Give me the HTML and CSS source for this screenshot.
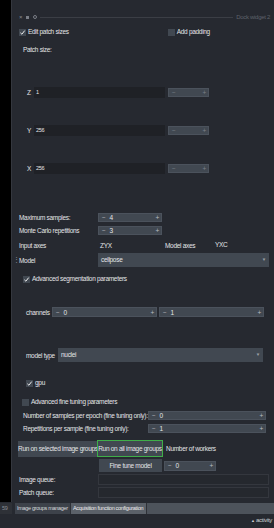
FILE: index.html
```html
<!DOCTYPE html>
<html lang="en">
<head>
  <meta charset="UTF-8">
  <meta name="viewport" content="width=device-width, initial-scale=1.0">
  <title>Dock widget 2</title>
  <link rel="stylesheet" href="styles.css">
</head>
<body>
  <div class="window">
    <div class="main">
      <!-- canvas strip on the left -->
      <div class="rail"></div>

      <div class="dock">
        <!-- Title bar of the dock -->
        <div class="row dock-title">
          <span class="ticon">&times;</span>
          <span class="ticon sq"></span>
          <span class="ticon ring"></span>
          <span class="title-line"></span>
          <span class="title-text">Dock widget 2</span>
        </div>

        <div class="row r-check">
          <span class="check on"><svg viewBox="0 0 7 7"><path d="M1.4 3.8 L2.9 5.2 L5.7 1.6" fill="none" stroke="#fff" stroke-width="0.9"/></svg></span>
          <span class="txt">Edit patch sizes</span>
          <span class="check pad"></span>
          <span class="txt">Add padding</span>
        </div>

        <div class="row r-patch"><span class="txt">Patch size:</span></div>

        <!-- Patch size fields -->
        <div class="row axis r-z">
          <span class="axis-lbl">Z</span>
          <span class="field">1</span>
          <span class="spin small"><span>&minus;</span><span>+</span></span>
        </div>
        <div class="row axis r-y">
          <span class="axis-lbl">Y</span>
          <span class="field">256</span>
          <span class="spin small"><span>&minus;</span><span>+</span></span>
        </div>
        <div class="row axis r-x">
          <span class="axis-lbl">X</span>
          <span class="field">256</span>
          <span class="spin small"><span>&minus;</span><span>+</span></span>
        </div>

        <div class="row form r-max">
          <span class="lbl">Maximum samples:</span>
          <span class="spin num"><span>&minus;</span><span class="val">4</span><span>+</span></span>
        </div>
        <div class="row form r-mc">
          <span class="lbl">Monte Carlo repetitions</span>
          <span class="spin num"><span>&minus;</span><span class="val">3</span><span>+</span></span>
        </div>
        <div class="row form r-axes">
          <span class="lbl">Input axes</span>
          <span class="axes-val">ZYX</span>
          <span class="axes-lbl">Model axes</span>
          <span class="txt">YXC</span>
        </div>
        <div class="row form r-model">
          <span class="grip">&#8942;</span>
          <span class="lbl">Model</span>
          <span class="combo wide">cellpose<span class="arrow">&#9660;</span></span>
        </div>

        <div class="row r-adv">
          <span class="check on"><svg viewBox="0 0 7 7"><path d="M1.4 3.8 L2.9 5.2 L5.7 1.6" fill="none" stroke="#fff" stroke-width="0.9"/></svg></span>
          <span class="txt">Advanced segmentation parameters</span>
        </div>

        <div class="row r-chan">
          <span class="chan-lbl">channels</span>
          <span class="spin chan"><span>&minus;</span><span class="val">0</span><span>+</span></span>
          <span class="spin chan"><span>&minus;</span><span class="val">1</span><span>+</span></span>
        </div>

        <div class="row r-type">
          <span class="type-lbl">model type</span>
          <span class="combo type">nuclei<span class="arrow">&#9660;</span></span>
        </div>

        <div class="row r-gpu">
          <span class="check on"><svg viewBox="0 0 7 7"><path d="M1.4 3.8 L2.9 5.2 L5.7 1.6" fill="none" stroke="#fff" stroke-width="0.9"/></svg></span>
          <span class="txt">gpu</span>
        </div>

        <div class="row r-fine">
          <span class="check"></span>
          <span class="txt">Advanced fine tuning parameters</span>
        </div>

        <div class="row r-epoch">
          <span class="long-lbl">Number of samples per epoch (fine tuning only):</span>
          <span class="spin long"><span>&minus;</span><span class="val">0</span><span>+</span></span>
        </div>
        <div class="row r-rep">
          <span class="long-lbl">Repetitions per sample (fine tuning only):</span>
          <span class="spin long"><span>&minus;</span><span class="val">1</span><span>+</span></span>
        </div>

        <div class="row r-run">
          <button class="btn sel">Run on selected image groups</button>
          <button class="btn all">Run on all image groups</button>
          <span class="txt workers">Number of workers</span>
        </div>
        <div class="row r-tune">
          <button class="btn tune">Fine tune model</button>
          <span class="spin workers-spin"><span>&minus;</span><span class="val">0</span><span>+</span></span>
        </div>

        <div class="row form r-queue">
          <span class="lbl">Image queue:</span>
          <span class="queue"></span>
        </div>
        <div class="row form r-queue">
          <span class="lbl">Patch queue:</span>
          <span class="queue"></span>
        </div>
      </div>
    </div>

    <!-- Tabs of the docked widgets -->
    <div class="tabbar">
      <span class="tab-num">59</span>
      <span class="tab">Image groups manager</span>
      <span class="tab active">Acquisition function configuration</span>
    </div>

    <div class="status"><span class="status-arrow">&#9650;</span> activity</div>
  </div>
</body>
</html>
```

FILE: styles.css
```css
/* Reset base */
* {
  box-sizing: border-box;
  margin: 0;
  padding: 0;
}
body {
  font-family: 'Liberation Sans', Arial, sans-serif;
  font-size: 6.5px;
  letter-spacing: -0.3px;
  background: #262930;
  color: #e4e5e7;
  width: 274px;
  height: 528px;
  overflow: hidden;
}
.window {
  display: flex;
  flex-direction: column;
  height: 528px;
}
.main {
  display: flex;
  height: 502px;
}
.rail {
  width: 12px;
  background: #000;
  border-right: 1px solid #34373e;
}
.dock {
  flex: 1;
  display: flex;
  flex-direction: column;
}
.row {
  display: flex;
  align-items: center;
  white-space: nowrap;
}
.txt { line-height: 8px; }

/* Title bar */
.dock-title {
  margin-top: 13px;
  height: 8px;
  padding-left: 7px;
  color: #6d717a;
}
.ticon {
  width: 4px;
  height: 4px;
  margin-right: 2px;
  font-size: 6px;
  line-height: 4px;
  color: #8a8e96;
}
.ticon.sq {
  width: 3px;
  height: 3px;
  margin: 0 4px 0 1px;
  background: #7a7e86;
}
.ticon.ring {
  width: 4px;
  height: 4px;
  border: 1px solid #7a7e86;
  border-radius: 50%;
}
.title-line {
  flex: 1;
  height: 1px;
  margin: 0 3px 0 1px;
  background: #3b3e45;
}
.title-text {
  padding-right: 4px;
  font-size: 6px;
  color: #5e626a;
}

/* Check boxes */
.check {
  width: 7px;
  height: 7px;
  margin-right: 2px;
  background: #414851;
  display: inline-flex;
}
.check svg { width: 7px; height: 7px; }
.r-check { margin-top: 7px; height: 8px; padding-left: 7px; }
.check.pad { margin-left: 99px; }
.r-patch { margin-top: 10px; height: 8px; padding-left: 11px; }

/* Patch size rows */
.axis { height: 11px; padding-left: 15px; }
.r-z { margin-top: 33px; }
.r-y, .r-x { margin-top: 27px; }
.axis-lbl { width: 7px; }
.field {
  width: 131px;
  height: 11px;
  padding-left: 2px;
  background: #1f2126;
  line-height: 11px;
  font-size: 5.5px;
}

/* Spin boxes */
.spin {
  display: flex;
  align-items: center;
  justify-content: space-between;
  background: #414851;
  border: 1px solid #4b525c;
  padding: 0 2px 0 3px;
  color: #b9bcc1;
}
.spin .val {
  flex: 1;
  padding-left: 4px;
  color: #e4e5e7;
}
.spin.small {
  width: 41px;
  height: 9px;
  margin-left: 3px;
  color: #7c8088;
}
.spin.num { width: 64px; height: 9px; }
.spin.chan { width: 105px; height: 10px; margin-right: 2px; }
.spin.long { width: 118px; height: 9px; }
.workers-spin { width: 52px; height: 10px; margin-left: 2px; }

/* Form rows */
.form { padding-left: 7px; }
.lbl { width: 79px; }
.r-max { margin-top: 39px; height: 9px; }
.r-mc { margin-top: 4px; height: 9px; }
.r-axes { margin-top: 6px; height: 8px; }
.axes-val { width: 67px; padding-left: 2px; }
.axes-lbl { width: 50px; }
.r-model {
  margin-top: 4px;
  height: 14px;
  padding-left: 0;
}
.grip {
  width: 7px;
  padding-left: 1px;
  color: #8a8e96;
  font-size: 7px;
}
.combo {
  position: relative;
  height: 14px;
  line-height: 14px;
  padding-left: 3px;
  background: #414851;
}
.combo.wide { width: 171px; }
.arrow {
  position: absolute;
  right: 3px;
  top: 0;
  font-size: 4.5px;
  color: #9ca0a6;
}
.r-adv { margin-top: 8px; height: 8px; padding-left: 11px; }

.r-chan { margin-top: 24px; height: 10px; padding-left: 14px; }
.chan-lbl { width: 26px; }
.r-type { margin-top: 31px; height: 14px; padding-left: 14px; }
.type-lbl { width: 32px; }
.combo.type { width: 205px; }
.r-gpu { margin-top: 17px; height: 8px; padding-left: 14px; }
.r-fine { margin-top: 11px; height: 8px; padding-left: 10px; }

.r-epoch { margin-top: 5px; height: 9px; padding-left: 11px; }
.r-rep { margin-top: 4px; height: 9px; padding-left: 11px; }
.long-lbl { width: 125px; }

/* Buttons */
.btn {
  font: inherit;
  letter-spacing: inherit;
  color: #e4e5e7;
  background: #414851;
  border: none;
  white-space: nowrap;
}
.r-run { margin-top: 7px; height: 17px; padding-left: 6px; }
.btn.sel { width: 79px; height: 16px; }
.btn.all {
  width: 66px;
  height: 17px;
  border: 1px solid #3fae49;
}
.workers { margin-left: 3px; }
.r-tune { margin-top: 2px; height: 13px; padding-left: 87px; }
.btn.tune { width: 63px; height: 13px; }

.r-queue { margin-top: 2px; height: 11px; }
.queue {
  width: 171px;
  height: 11px;
  border: 1px solid #34373e;
  background: #25282e;
}

/* Tab bar */
.tabbar {
  display: flex;
  margin-top: 1px;
  height: 11px;
  background: #4d535b;
  font-size: 5.5px;
  letter-spacing: -0.3px;
  white-space: nowrap;
}
.tab-num {
  flex: none;
  width: 15px;
  padding-left: 2px;
  line-height: 11px;
  background: #2e3137;
  color: #8a8e96;
  border-right: 3px solid #262930;
}
.tab {
  flex: none;
  height: 11px;
  line-height: 11px;
  padding: 0 2px;
  width: 56px;
  overflow: hidden;
  background: #3d424a;
  border-right: 1px solid #2e3137;
  color: #d8dadd;
}
.tab.active {
  width: 76px;
  background: #5b6169;
  color: #eceef0;
}
.status {
  margin-top: 3px;
  padding-right: 2px;
  text-align: right;
  font-size: 6px;
  white-space: nowrap;
  color: #cfd1d4;
}
.status-arrow { font-size: 4px; }
```
